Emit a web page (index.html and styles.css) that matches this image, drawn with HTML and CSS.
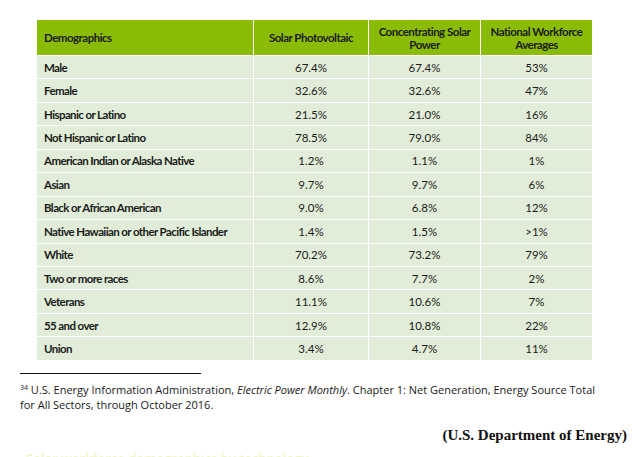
FILE: index.html
```html
<!DOCTYPE html>
<html>
<head>
<meta charset="utf-8">
<link rel="stylesheet" href="styles.css">
</head>
<body>
<div class="page">
  <table class="demo">
    <thead>
      <tr>
        <th class="c1">Demographics</th>
        <th class="c2">Solar Photovoltaic</th>
        <th class="c3">Concentrating Solar Power</th>
        <th class="c4">National Workforce Averages</th>
      </tr>
    </thead>
    <tbody>
      <tr><td class="lbl">Male</td><td>67.4%</td><td>67.4%</td><td>53%</td></tr>
      <tr><td class="lbl">Female</td><td>32.6%</td><td>32.6%</td><td>47%</td></tr>
      <tr><td class="lbl">Hispanic or Latino</td><td>21.5%</td><td>21.0%</td><td>16%</td></tr>
      <tr><td class="lbl">Not Hispanic or Latino</td><td>78.5%</td><td>79.0%</td><td>84%</td></tr>
      <tr><td class="lbl">American Indian or Alaska Native</td><td>1.2%</td><td>1.1%</td><td>1%</td></tr>
      <tr><td class="lbl">Asian</td><td>9.7%</td><td>9.7%</td><td>6%</td></tr>
      <tr><td class="lbl">Black or African American</td><td>9.0%</td><td>6.8%</td><td>12%</td></tr>
      <tr><td class="lbl">Native Hawaiian or other Pacific Islander</td><td>1.4%</td><td>1.5%</td><td>&gt;1%</td></tr>
      <tr><td class="lbl">White</td><td>70.2%</td><td>73.2%</td><td>79%</td></tr>
      <tr><td class="lbl">Two or more races</td><td>8.6%</td><td>7.7%</td><td>2%</td></tr>
      <tr><td class="lbl">Veterans</td><td>11.1%</td><td>10.6%</td><td>7%</td></tr>
      <tr><td class="lbl">55 and over</td><td>12.9%</td><td>10.8%</td><td>22%</td></tr>
      <tr><td class="lbl">Union</td><td>3.4%</td><td>4.7%</td><td>11%</td></tr>
    </tbody>
  </table>
  <div class="rule"></div>
  <p class="footnote"><sup>34</sup> U.S. Energy Information Administration, <em>Electric Power Monthly</em>. Chapter 1: Net Generation, Energy Source Total for All Sectors, through October 2016.</p>
  <p class="source">(U.S. Department of Energy)</p>
  <p class="faint">Solar workforce demographics by technology</p>
</div>
</body>
</html>
```
FILE: styles.css
```css
html, body {
  margin: 0;
  padding: 0;
  background: #ffffff;
}
.page {
  width: 641px;
  height: 457px;
  overflow: hidden;
  padding-top: 19px;
  box-sizing: border-box;
}
.demo {
  margin-left: 36px;
  width: 557px;
  border-collapse: collapse;
  table-layout: fixed;
  font-family: Lato, "Open Sans", sans-serif;
  font-size: 11.5px;
  color: #1b1b1b;
}
.demo th, .demo td {
  border: 1px solid #ffffff;
  padding: 0;
}
.demo th {
  background: #8bbc05;
  height: 35px;
  font-weight: 700;
  text-align: center;
  line-height: 13px;
  letter-spacing: -0.5px;
}
.demo th.c1 {
  text-align: left;
  padding-left: 7px;
}
.c1 { width: 209px; }
.c2 { width: 114px; }
.c3 { width: 111px; }
.c4 { width: 111px; }
.demo td {
  background: #e1edd8;
  height: 22.45px;
  text-align: center;
  font-weight: 400;
}
.demo td.lbl {
  text-align: left;
  padding-left: 7px;
  font-weight: 700;
  letter-spacing: -0.6px;
}
.rule {
  width: 181px;
  height: 1px;
  background: #111111;
  margin: 12px 0 0 20px;
}
.footnote {
  margin: 8px 0 0 20px;
  width: 592px;
  font-family: "Open Sans", sans-serif;
  font-size: 11px;
  line-height: 15px;
  color: #1b1b1b;
}
.footnote sup {
  font-size: 7px;
  line-height: 0;
  vertical-align: 4px;
}
.source {
  margin: 15px 14px 0 0;
  text-align: right;
  font-family: "Liberation Serif", serif;
  font-weight: 700;
  font-size: 15px;
  line-height: 17px;
  color: #111111;
}
.faint {
  margin: 6px 0 0 26px;
  font-family: "Open Sans", sans-serif;
  font-weight: 600;
  font-size: 13px;
  line-height: 16px;
  color: #f1f6c4;
}
```
